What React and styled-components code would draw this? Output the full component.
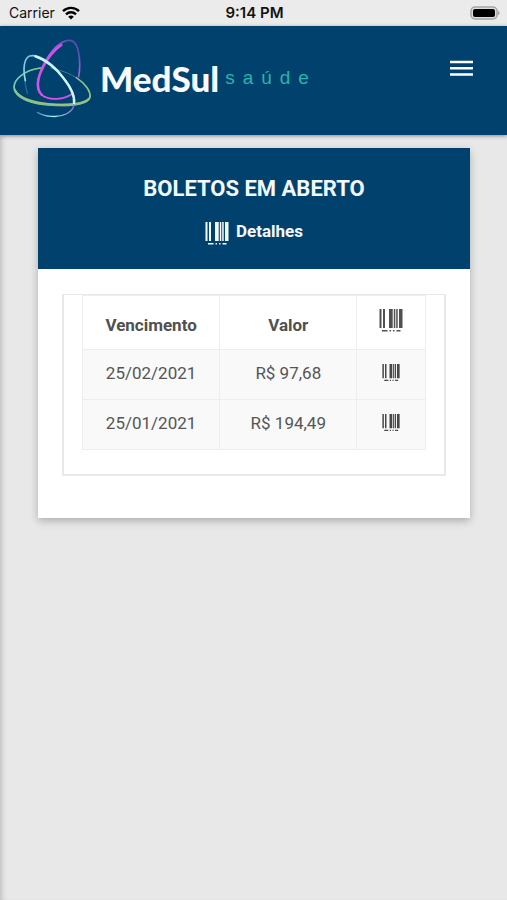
import React from "react";
import styled, { createGlobalStyle } from "styled-components";

const navy = "#01416d";

const GlobalStyle = createGlobalStyle`
  * { box-sizing: border-box; }
  body {
    margin: 0;
    background: #e8e8e8;
    color: #555;
    font-family: Roboto, sans-serif;
  }
`;

const Screen = styled.div`
  display: flex;
  flex-direction: column;
  min-height: 100vh;
`;

const StatusBar = styled.div`
  display: grid;
  grid-template-columns: 1fr auto 1fr;
  align-items: center;
  height: 26px;
  padding: 0 7px 0 9px;
  background: #ebebeb;
  color: #111;
  font: 400 14px/26px Inter, sans-serif;
`;

const Carrier = styled.div`
  display: flex;
  align-items: center;
  gap: 7px;
`;

const Clock = styled.time`
  font-size: 15px;
  font-weight: 600;
`;

const Battery = styled.svg`
  justify-self: end;
`;

const AppBar = styled.header`
  display: flex;
  align-items: flex-start;
  justify-content: space-between;
  height: 109px;
  padding: 8px 32px 0 8px;
  background: ${navy};
  box-shadow: 0 1px 4px rgba(0, 0, 0, 0.4);
`;

const Brand = styled.a`
  display: flex;
  align-items: center;
  text-decoration: none;
`;

const BrandWords = styled.span`
  display: flex;
  align-items: center;
  gap: 6px;
  padding-left: 2px;
`;

const BrandName = styled.span`
  color: #f8faff;
  font: 900 35px/44px Lato, sans-serif;
`;

const BrandTag = styled.span`
  color: #27b5ae;
  font: 400 19px/24px "Liberation Sans", sans-serif;
  letter-spacing: 8px;
`;

const MenuButton = styled.button`
  display: flex;
  padding: 21px 0;
  border: 0;
  background: none;
  color: #fff;
  cursor: pointer;
`;

const Content = styled.main`
  flex: 1;
  padding: 13px 37px 24px 38px;
  box-shadow: inset 5px 0 5px -3px rgba(0, 0, 0, 0.18);
`;

const Card = styled.section`
  padding-bottom: 42px;
  background: #fff;
  box-shadow: 0 3px 8px rgba(0, 0, 0, 0.25);
`;

const CardHeader = styled.div`
  display: flex;
  flex-direction: column;
  align-items: center;
  gap: 14px;
  height: 121px;
  padding-top: 26px;
  background: ${navy};
  color: #f4f9ff;
`;

const Title = styled.h1`
  margin: 0;
  font-size: 22px;
  font-weight: 700;
  line-height: 30px;
`;

const Details = styled.h2`
  display: flex;
  align-items: flex-start;
  gap: 7px;
  margin: 0;
  font-size: 17px;
  font-weight: 700;
  line-height: 26px;

  svg { margin-top: 4px; }
`;

const TableFrame = styled.div`
  margin: 25px 24px 0;
  padding: 0 18px 24px;
  border: 2px solid #e8e8e8;
  border-top-width: 1px;
`;

const BillTable = styled.table`
  width: 100%;
  table-layout: fixed;
  border-collapse: collapse;
  font-size: 17px;
  line-height: 24px;
  text-align: center;
`;

const HeadCell = styled.th`
  width: ${({ $width }) => $width};
  height: 54px;
  padding: 4px 0 0;
  border: 1px solid #eee;
  color: #505050;
  font-weight: 700;
`;

const Cell = styled.td`
  height: 50px;
  padding: 0 0 4px;
  border: 1px solid #eee;
  background: #f9f9f9;
`;

const IconHolder = styled.span`
  display: flex;
  justify-content: center;
  padding-bottom: 8px;
`;

const BarcodeButton = styled.button`
  display: flex;
  margin: 0 auto;
  padding: 0;
  border: 0;
  background: none;
  color: #484848;
  cursor: pointer;
`;

function Barcode({ size = 24 }) {
  return (
    <svg width={size} height={size} viewBox="0 0 24 24" fill="currentColor" aria-hidden="true">
      <path d="M0.500 0h2v19h-2zM4 0h2v19H4zM10 0h3.700v19H10zM14.800 0h1.500v19h-1.500zM17.200 0h1.500v19h-1.500zM20 0h3.500v19H20z" />
      <path d="M3 21h5.500v1.500H3zM10.500 21h1.500v1.500h-1.500zM14 21h1.500v1.500H14zM17.500 21h4v1.500h-4z" />
    </svg>
  );
}

function Wifi() {
  return (
    <svg width="18" height="14" viewBox="0 0 18 14" fill="none" stroke="#000" strokeWidth="2.4" aria-hidden="true">
      <path d="M1 5.2C5.5.7 12.5.7 17 5.2" />
      <path d="M4 8.3c2.8-2.7 7.2-2.7 10 0" />
      <path d="M9 13.5 6.2 10.7c1.6-1.5 4-1.5 5.6 0z" fill="#000" stroke="none" />
    </svg>
  );
}

function LogoMark() {
  return (
    <svg width="90" height="88" viewBox="0 0 270 264" fill="none" strokeLinecap="round" aria-hidden="true">
      <defs>
        <linearGradient id="violet" gradientUnits="userSpaceOnUse" x1="90" y1="180" x2="215" y2="60">
          <stop offset="0" stopColor="#f04cf0" />
          <stop offset=".45" stopColor="#b45be0" />
          <stop offset=".8" stopColor="#a45bd8" />
          <stop offset="1" stopColor="#5a4fb0" />
        </linearGradient>
        <linearGradient id="green" gradientUnits="userSpaceOnUse" x1="18" y1="150" x2="248" y2="190">
          <stop offset="0" stopColor="#6ccfc0" />
          <stop offset=".35" stopColor="#8cc675" />
          <stop offset=".7" stopColor="#6fb9a0" />
          <stop offset="1" stopColor="#9fc470" />
        </linearGradient>
        <linearGradient id="ice" gradientUnits="userSpaceOnUse" x1="50" y1="70" x2="200" y2="210">
          <stop offset="0" stopColor="#6fc3da" />
          <stop offset=".5" stopColor="#c9fbfa" />
          <stop offset="1" stopColor="#d5dcfb" />
        </linearGradient>
        <linearGradient id="trail" gradientUnits="userSpaceOnUse" x1="85" y1="240" x2="198" y2="212">
          <stop offset="0" stopColor="#2f84a8" />
          <stop offset=".4" stopColor="#a6f0f5" />
          <stop offset="1" stopColor="#8a68cf" />
        </linearGradient>
      </defs>
      <path d="M98 102C50 108 18 135 18 160C22 195 75 210 125 213C190 218 240 210 246 190C250 165 215 130 170 114C150 107 138 104 128 102" stroke="#397f88" strokeWidth="3" />
      <path d="M98 102C50 108 18 135 18 160C22 195 75 210 125 213C190 218 240 210 246 190C249 172 232 149 205 131" stroke="url(#green)" strokeWidth="5" />
      <path d="M20 167C32 194 78 207 125 211C185 216 230 210 243 194" stroke="#7fc391" strokeWidth="7" />
      <path d="M23 170C38 193 80 204 125 209C178 213 218 210 240 196" stroke="#d0bb69" strokeWidth="2" />
      <path d="M212 128C220 80 212 25 190 20C160 12 125 55 105 95C88 130 82 165 100 182C125 203 170 195 192 180" stroke="url(#violet)" strokeWidth="5" />
      <path d="M160 33C138 48 118 74 105 100C88 132 84 165 101 182" stroke="#d052e8" strokeWidth="7" />
      <path d="M58 178C54 165 50 140 49 118" stroke="#286c90" strokeWidth="4" />
      <path d="M52 140C44 105 48 73 65 66C95 58 140 95 165 130C190 160 203 190 198 212" stroke="url(#ice)" strokeWidth="5" />
      <path d="M82 67C112 77 145 104 166 132C188 160 201 186 198 208" stroke="#cdf5fb" strokeWidth="7" />
      <path d="M198 212C195 235 165 250 130 247C115 246 98 241 88 235" stroke="url(#trail)" strokeWidth="4" />
    </svg>
  );
}

const bills = [
  { due: "25/02/2021", amount: "R$ 97,68" },
  { due: "25/01/2021", amount: "R$ 194,49" },
];

export default function App() {
  return (
    <Screen>
      <GlobalStyle />
      <StatusBar>
        <Carrier>Carrier <Wifi /></Carrier>
        <Clock>9:14 PM</Clock>
        <Battery width="31" height="14" viewBox="0 0 31 14" aria-label="Bateria">
          <rect x="2" y="1" width="26" height="12" rx="4" fill="#ddd" stroke="#a5a5a5" strokeWidth="1.5" />
          <rect x="4" y="3" width="22" height="8" rx="2" fill="#000" />
          <path d="M29 5c2 .5 2 3.500 0 4z" fill="#a5a5a5" />
        </Battery>
      </StatusBar>
      <AppBar>
        <Brand href="#">
          <LogoMark />
          <BrandWords>
            <BrandName>MedSul</BrandName>
            <BrandTag>saúde</BrandTag>
          </BrandWords>
        </Brand>
        <MenuButton type="button" aria-label="Menu">
          <svg width="27" height="27" viewBox="0 0 27 27" stroke="currentColor" strokeWidth="2.500" aria-hidden="true">
            <path d="M2 7h23M2 13.200h23M2 19.400h23" />
          </svg>
        </MenuButton>
      </AppBar>
      <Content>
        <Card>
          <CardHeader>
            <Title>BOLETOS EM ABERTO</Title>
            <Details><Barcode /> Detalhes</Details>
          </CardHeader>
          <TableFrame>
            <BillTable>
              <thead>
                <tr>
                  <HeadCell scope="col" $width="40%">Vencimento</HeadCell>
                  <HeadCell scope="col" $width="40%">Valor</HeadCell>
                  <HeadCell scope="col" $width="20%" aria-label="Código de barras">
                    <IconHolder><Barcode /></IconHolder>
                  </HeadCell>
                </tr>
              </thead>
              <tbody>
                {bills.map((bill) => (
                  <tr key={bill.due}>
                    <Cell>{bill.due}</Cell>
                    <Cell>{bill.amount}</Cell>
                    <Cell>
                      <BarcodeButton type="button" aria-label={`Código de barras ${bill.due}`}>
                        <Barcode size={18} />
                      </BarcodeButton>
                    </Cell>
                  </tr>
                ))}
              </tbody>
            </BillTable>
          </TableFrame>
        </Card>
      </Content>
    </Screen>
  );
}
